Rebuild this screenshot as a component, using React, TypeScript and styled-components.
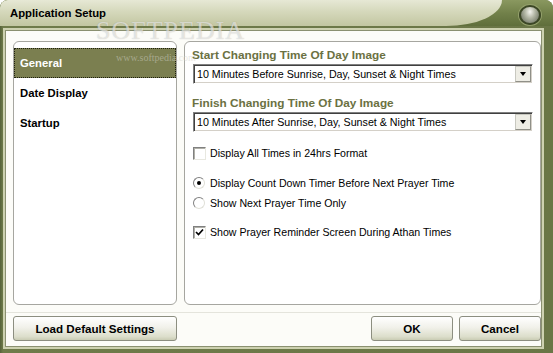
import styled, { createGlobalStyle } from "styled-components";

const GlobalStyle = createGlobalStyle`
  html, body {
    margin: 0;
    padding: 0;
    background: #ffffff;
    overflow: hidden;
  }
  * {
    box-sizing: border-box;
  }
`;

const Window = styled.div`
  position: relative;
  width: 553px;
  height: 353px;
  display: flex;
  flex-direction: column;
  background: linear-gradient(to right, #56623a 0px, #6f7b4a 3px, #6a7646 100%);
  border-radius: 8px 8px 0 0;
  font-family: "Liberation Sans", Arial, sans-serif;
  font-size: 11px;
  color: #000;
  overflow: hidden;
`;

const TitleBar = styled.div`
  height: 26px;
  display: flex;
  align-items: flex-start;
  background: linear-gradient(to bottom, #8a9860 0%, #72814a 50%, #5f6e3b 100%);
`;

const TitleGlow = styled.div`
  width: 502px;
  height: 26px;
  padding-left: 10px;
  line-height: 27px;
  font-weight: bold;
  font-size: 11.3px;
  color: #000;
  border-radius: 7px 0 56px 0 / 7px 0 26px 0;
  background: linear-gradient(to bottom, #e6e8d5 0%, #d5d8bb 45%, #c2c6a1 100%);
`;

const CloseButton = styled.div`
  width: 22px;
  height: 20px;
  margin: 5px 0 0 17px;
  border-radius: 50%;
  border: 2px solid #3c4726;
  background: radial-gradient(ellipse at 50% 30%, #f4f4ee 0%, #b2b6a4 40%, #5b6150 100%);
  box-shadow: 0 0 0 1px #94a06c;
`;

const Client = styled.div`
  flex: 1;
  margin: 4px 11px 6px 5px;
  display: flex;
  flex-direction: column;
  padding: 10px 0 5px 7px;
  background: #fcfcf8;
  border: 1px solid #8a9070;
  box-shadow: 0 0 0 2px #cdd1b0;
`;

const Panels = styled.div`
  height: 264px;
  display: flex;
  gap: 7px;
`;

const SidePanel = styled.div`
  width: 164px;
  padding-top: 6px;
  background: #ffffff;
  border: 1px solid #a6a6a0;
  border-radius: 6px;
`;

const NavItem = styled.div<{ $active?: boolean }>`
  height: 30px;
  display: flex;
  align-items: center;
  padding-left: 5px;
  font-weight: bold;
  font-size: 11.3px;
  color: ${(p) => (p.$active ? "#ffffff" : "#000000")};
  background: ${(p) => (p.$active ? "#7b7f50" : "transparent")};
  border: 1px dotted ${(p) => (p.$active ? "#1e2010" : "transparent")};
`;

const MainPanel = styled.div`
  flex: 1;
  padding: 6px 7px 0 7px;
  background: #ffffff;
  border: 1px solid #a6a6a0;
  border-radius: 6px;
  display: flex;
  flex-direction: column;
`;

const FieldLabel = styled.div<{ $gap?: number }>`
  height: 14px;
  line-height: 14px;
  margin-top: ${(p) => p.$gap ?? 0}px;
  margin-bottom: 2px;
  font-weight: bold;
  font-size: 11.8px;
  color: #6b7142;
`;

const Select = styled.div`
  height: 20px;
  display: flex;
  align-items: center;
  padding: 0 1px 0 3px;
  margin-left: 1px;
  background: #ffffff;
  border-top: 1px solid #808080;
  border-left: 1px solid #808080;
  border-bottom: 1px solid #ffffff;
  border-right: 1px solid #ffffff;
  box-shadow: inset 1px 1px 0 #404040, inset -1px -1px 0 #d4d0c8;
`;

const SelectText = styled.span`
  flex: 1;
  font-size: 10.7px;
  white-space: nowrap;
`;

const DropButton = styled.div`
  width: 16px;
  height: 16px;
  display: flex;
  align-items: center;
  justify-content: center;
  background: #eeede5;
  border: 1px solid #c8c8c0;
  border-right-color: #909088;
  border-bottom-color: #909088;
`;

const Arrow = styled.span`
  width: 0;
  height: 0;
  border-left: 3.5px solid transparent;
  border-right: 3.5px solid transparent;
  border-top: 4px solid #000;
`;

const OptionRow = styled.div<{ $gap: number }>`
  height: 16px;
  margin-top: ${(p) => p.$gap}px;
  display: flex;
  align-items: center;
  gap: 4px;
  padding-left: 1px;
  font-size: 10.6px;
`;

const CheckBox = styled.span`
  width: 13px;
  height: 13px;
  display: flex;
  align-items: center;
  justify-content: center;
  background: #ffffff;
  border-top: 1px solid #808080;
  border-left: 1px solid #808080;
  border-bottom: 1px solid #e8e8e0;
  border-right: 1px solid #e8e8e0;
  box-shadow: inset 1px 1px 0 #b0b0a8;
`;

const Radio = styled.span<{ $checked?: boolean }>`
  width: 12px;
  height: 12px;
  margin: 0 1px 0 0;
  border-radius: 50%;
  display: flex;
  align-items: center;
  justify-content: center;
  background: #ffffff;
  border: 1px solid;
  border-color: #808080 #e0e0d8 #e0e0d8 #808080;
  &::after {
    content: "";
    width: 4px;
    height: 4px;
    border-radius: 50%;
    background: ${(p) => (p.$checked ? "#000" : "transparent")};
  }
`;

const Separator = styled.div`
  height: 1px;
  margin: 7px 0 0 -7px;
  background: #e4e4dc;
`;

const ButtonRow = styled.div`
  margin-top: 3px;
  height: 25px;
  display: flex;
  gap: 6px;
`;

const Spacer = styled.div`
  flex: 1;
`;

const Button = styled.div<{ $width: number }>`
  width: ${(p) => p.$width}px;
  height: 25px;
  display: flex;
  align-items: center;
  justify-content: center;
  font-weight: bold;
  font-size: 11.6px;
  border: 1px solid #8c8e80;
  border-radius: 3px;
  background: linear-gradient(to bottom, #ffffff 0%, #f1f1ea 45%, #dcdecb 85%, #c9ccb4 100%);
`;

const Watermark = styled.div`
  position: absolute;
  left: 96px;
  top: 16px;
  font-family: "Liberation Serif", "Times New Roman", serif;
  font-size: 26px;
  letter-spacing: 1px;
  color: rgba(255, 255, 255, 0.55);
  text-shadow: 0 0 1px rgba(120, 120, 110, 0.45);
  pointer-events: none;
`;

const WatermarkUrl = styled.div`
  position: absolute;
  left: 116px;
  top: 52px;
  font-family: "Liberation Serif", "Times New Roman", serif;
  font-size: 10px;
  color: rgba(210, 210, 200, 0.5);
  pointer-events: none;
`;

const Check = () => (
  <svg width="9" height="9" viewBox="0 0 9 9">
    <path d="M1 4 L3.5 6.5 L8 1.5" stroke="#000" strokeWidth="1.7" fill="none" />
  </svg>
);

export default function App() {
  return (
    <>
      <GlobalStyle />
      <Window>
        <TitleBar>
          <TitleGlow>Application Setup</TitleGlow>
          <CloseButton />
        </TitleBar>
        <Client>
          <Panels>
            <SidePanel>
              <NavItem $active>General</NavItem>
              <NavItem>Date Display</NavItem>
              <NavItem>Startup</NavItem>
            </SidePanel>
            <MainPanel>
              <FieldLabel>Start Changing Time Of Day Image</FieldLabel>
              <Select>
                <SelectText>10 Minutes Before Sunrise, Day, Sunset &amp; Night Times</SelectText>
                <DropButton>
                  <Arrow />
                </DropButton>
              </Select>
              <FieldLabel $gap={12}>Finish Changing Time Of Day Image</FieldLabel>
              <Select>
                <SelectText>10 Minutes After Sunrise, Day, Sunset &amp; Night Times</SelectText>
                <DropButton>
                  <Arrow />
                </DropButton>
              </Select>
              <OptionRow $gap={13}>
                <CheckBox />
                Display All Times in 24hrs Format
              </OptionRow>
              <OptionRow $gap={14}>
                <Radio $checked />
                Display Count Down Timer Before Next Prayer Time
              </OptionRow>
              <OptionRow $gap={4}>
                <Radio />
                Show Next Prayer Time Only
              </OptionRow>
              <OptionRow $gap={13}>
                <CheckBox>
                  <Check />
                </CheckBox>
                Show Prayer Reminder Screen During Athan Times
              </OptionRow>
            </MainPanel>
          </Panels>
          <Separator />
          <ButtonRow>
            <Button $width={164}>Load Default Settings</Button>
            <Spacer />
            <Button $width={82}>OK</Button>
            <Button $width={82}>Cancel</Button>
          </ButtonRow>
        </Client>
        <Watermark>SOFTPEDIA</Watermark>
        <WatermarkUrl>www.softpedia.com</WatermarkUrl>
      </Window>
    </>
  );
}
